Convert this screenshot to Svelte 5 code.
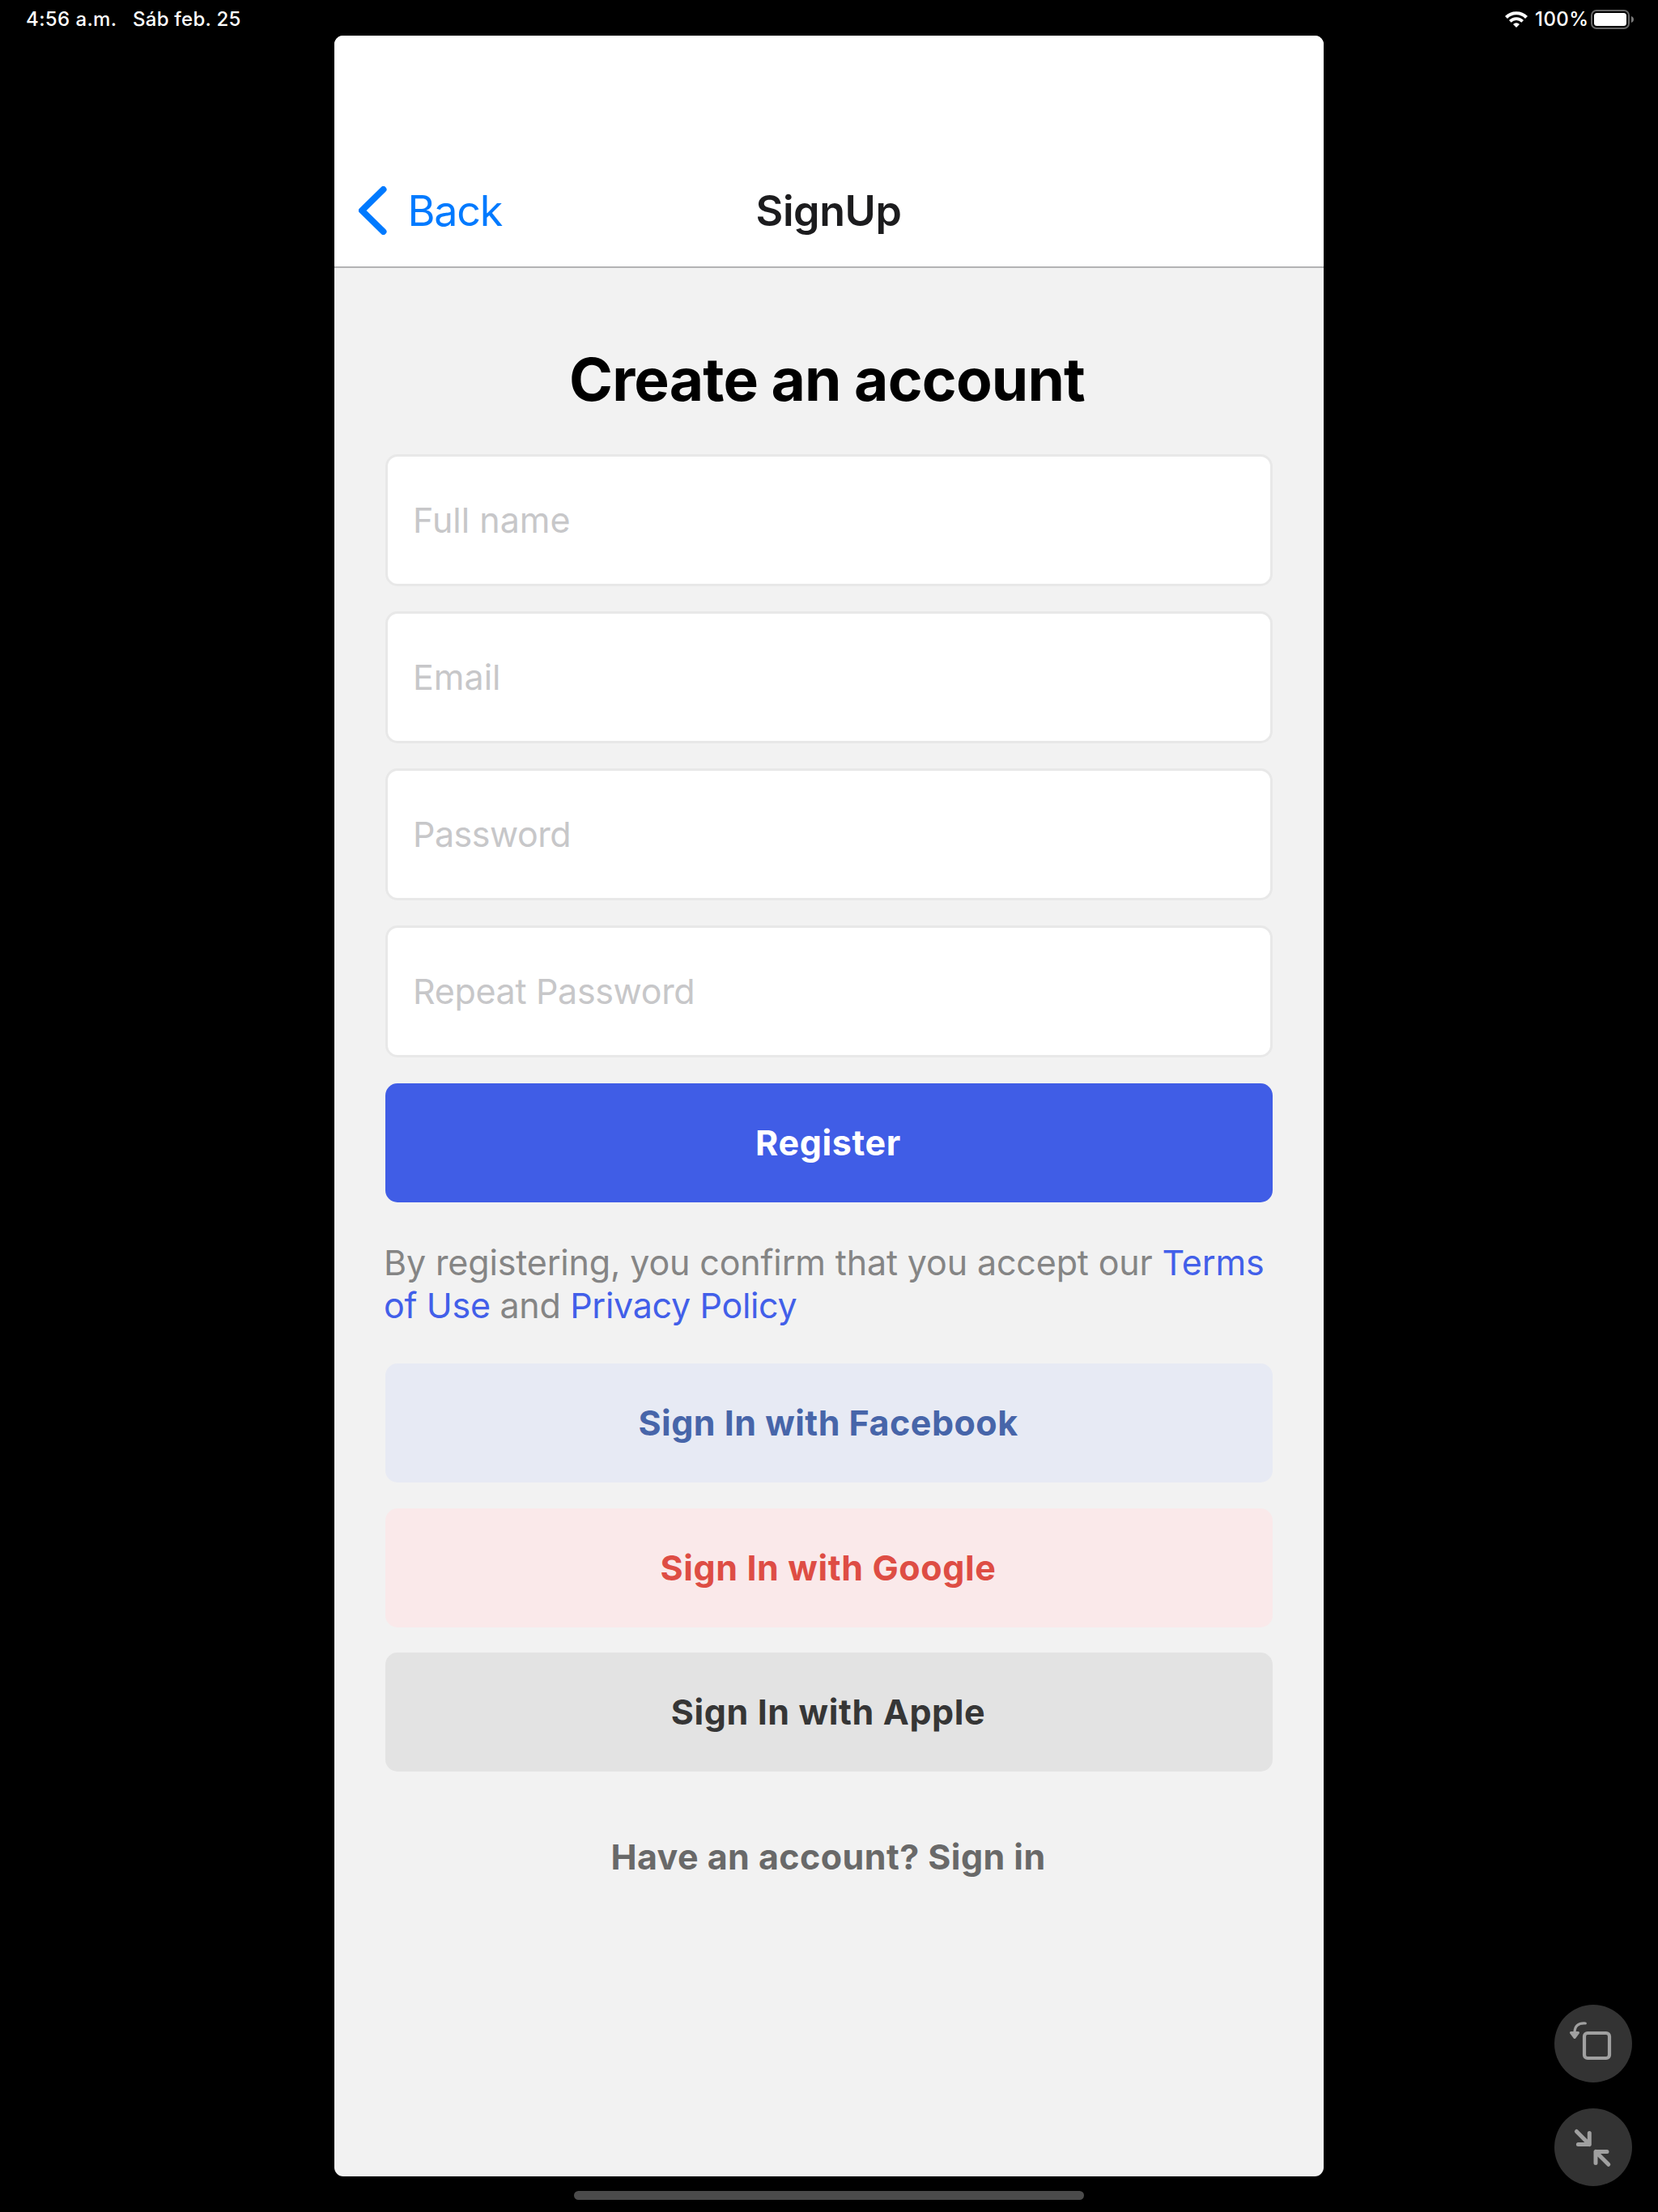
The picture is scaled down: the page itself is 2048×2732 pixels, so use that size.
<script>
  const fields = [
    { id: 'fullname', label: 'Full name' },
    { id: 'email', label: 'Email' },
    { id: 'password', label: 'Password' },
    { id: 'repeat', label: 'Repeat Password' }
  ];
  const providers = [
    { id: 'facebook', label: 'Sign In with Facebook' },
    { id: 'google', label: 'Sign In with Google' },
    { id: 'apple', label: 'Sign In with Apple' }
  ];
</script>

<div class="screen">
  <div class="status">
    <div class="clock">
      <span class="time">4:56 a.m.</span>
      <span class="date">Sáb feb. 25</span>
    </div>
    <div class="indicators">
      <svg class="wifi" width="28" height="20" viewBox="0 0 28 20" fill="none" stroke="#fff">
        <path d="M1.5 7.500a17.500 17.500 0 0 1 25 0" stroke-width="4.200" />
        <path d="M6.3 12.3a10.8 10.8 0 0 1 15.4 0" stroke-width="3.8" />
        <path d="M14 20l-4-4.1a5.8 5.8 0 0 1 8 0z" fill="#fff" stroke="none" />
      </svg>
      <span class="percent">100%</span>
      <svg class="battery" width="54" height="24" viewBox="0 0 54 24">
        <rect x="1" y="1" width="46" height="22" rx="6" fill="none" stroke="#666" stroke-width="2" />
        <rect x="4" y="4" width="40" height="16" rx="3.5" fill="#fff" />
        <path d="M50 8c4 1.3 4 6.7 0 8z" fill="#7a7a7a" />
      </svg>
    </div>
  </div>

  <main class="app">
    <header class="navbar">
      <div class="back">
        <svg width="35" height="60" viewBox="0 0 35 60" fill="none" stroke="#007aff" stroke-width="8" stroke-linecap="round" stroke-linejoin="round">
          <path d="M30.500 4L4 30L30.500 56" />
        </svg>
        <span>Back</span>
      </div>
      <div class="nav-title">SignUp</div>
    </header>

    <div class="content">
      <h1>Create an account</h1>
      <div class="fields">
        {#each fields as field (field.id)}
          <div class="field {field.id}">{field.label}</div>
        {/each}
      </div>
      <div class="button register">Register</div>
      <p class="terms">
        By registering, you confirm that you accept our <span class="link">Terms<br /></span><span class="second"><span class="link">of Use</span> and <span class="link">Privacy Policy</span></span>
      </p>
      <div class="providers">
        {#each providers as provider (provider.id)}
          <div class="button {provider.id}">{provider.label}</div>
        {/each}
      </div>
      <div class="signin">Have an account? Sign in</div>
    </div>
  </main>

  <div class="home"></div>

  <div class="controls">
    <div class="control">
      <svg width="96" height="96" viewBox="0 0 96 96" fill="none" stroke="#a0a0a0" stroke-width="4.200" stroke-linecap="round">
        <rect x="37" y="35" width="31" height="31" rx="4" />
        <path d="M38.300 23C29 22.400 25.200 26.500 25 34" stroke-width="3.200" />
        <path d="M20.500 34.500h9L25 40.500z" fill="#a0a0a0" stroke-width="3" stroke-linejoin="round" />
      </svg>
    </div>
    <div class="control">
      <svg width="96" height="96" viewBox="0 0 96 96" fill="none" stroke="#a0a0a0" stroke-width="5" stroke-linecap="round" stroke-linejoin="round">
        <path d="M27.400 28.500L43.300 44.500M43.300 30.500V44.500H29.400" />
        <path d="M66.800 69.300L51 53.400M65 53.400H51V67.500" />
      </svg>
    </div>
  </div>
</div>

<style>
  :global(body) {
    background: #000;
  }

  .screen {
    position: relative;
    display: flex;
    flex-direction: column;
    align-items: center;
    width: 2048px;
    height: 2732px;
    background: #000;
    overflow: hidden;
    font-family: Inter, 'Liberation Sans', sans-serif;
  }

  .status {
    box-sizing: border-box;
    display: flex;
    justify-content: space-between;
    width: 100%;
    height: 44px;
    padding: 0 29px 0 32px;
    color: #fff;
    font-size: 24px;
    font-weight: 450;
    line-height: 48px;
    white-space: nowrap;
  }

  .clock {
    display: flex;
  }

  .time {
    width: 132px;
    letter-spacing: 0.400px;
  }

  .date {
    letter-spacing: 0.250px;
  }

  .indicators {
    display: flex;
    align-items: flex-start;
  }

  .wifi {
    margin: 14px 9px 0 0;
  }

  .percent {
    width: 69px;
    letter-spacing: 0.450px;
  }

  .battery {
    margin-top: 12px;
  }

  .app {
    display: flex;
    flex-direction: column;
    width: 1222px;
    height: 2644px;
    border-radius: 11px;
    background: #f2f2f2;
    overflow: hidden;
  }

  .navbar {
    box-sizing: border-box;
    display: grid;
    grid-template-columns: 1fr auto 1fr;
    align-items: center;
    height: 287px;
    padding: 147px 30px 0;
    border-bottom: 2px solid #b3b3b4;
    background: #fff;
    font-size: 52px;
    line-height: 62px;
  }

  .back {
    display: flex;
    align-items: center;
    gap: 25.500px;
    color: #007aff;
    letter-spacing: -1.200px;
  }

  .back span,
  .nav-title {
    padding-top: 2px;
  }

  .nav-title {
    padding-right: 1px;
    color: #1c1c1e;
    font-weight: 600;
    letter-spacing: -0.407px;
  }

  .content {
    display: flex;
    flex-direction: column;
    padding: 93px 63px 0;
  }

  h1 {
    margin: 0 0 47px;
    color: #000;
    font-size: 73px;
    font-weight: 700;
    line-height: 90px;
    letter-spacing: -0.837px;
    text-align: center;
    text-indent: -5px;
  }

  .fields {
    display: flex;
    flex-direction: column;
    gap: 31px;
  }

  .field {
    box-sizing: border-box;
    height: 163px;
    padding-left: 31px;
    border: 3px solid #e8e8e8;
    border-radius: 15px;
    background: #fff;
    color: #c7c7c9;
    font-size: 43px;
    line-height: 157px;
  }

  .password {
    letter-spacing: -0.500px;
  }

  .repeat {
    letter-spacing: -0.330px;
  }

  .button {
    height: 147px;
    border-radius: 15px;
    font-size: 43px;
    font-weight: 700;
    line-height: 147px;
    text-align: center;
    text-indent: -2px;
  }

  .register {
    margin-top: 32px;
    background: #405de6;
    color: #fff;
    letter-spacing: 0.650px;
  }

  .terms {
    margin: 48px 0 45px;
    color: #858585;
    font-size: 43px;
    line-height: 53px;
    letter-spacing: -0.150px;
    text-indent: -2px;
    white-space: nowrap;
  }

  .second {
    letter-spacing: -0.313px;
    margin-left: -2px;
  }

  .link {
    color: #425fe9;
  }

  .providers {
    display: flex;
    flex-direction: column;
    gap: 31.500px;
  }

  .facebook {
    background: #e7eaf4;
    color: #4765a9;
    letter-spacing: 0.480px;
  }

  .google {
    background: #fae9ea;
    color: #de4d44;
    line-height: 146px;
    letter-spacing: 0.620px;
  }

  .apple {
    background: #e3e3e3;
    color: #363636;
    letter-spacing: 0.620px;
  }

  .signin {
    margin-top: 79px;
    color: #696969;
    font-size: 43px;
    font-weight: 700;
    line-height: 53px;
    letter-spacing: 0.430px;
    text-align: center;
    text-indent: -2px;
  }

  .home {
    width: 630px;
    height: 11px;
    margin-top: 18px;
    border-radius: 6px;
    background: #4b4b4b;
  }

  /* Floating window controls over the backdrop */
  .controls {
    position: absolute;
    right: 32px;
    bottom: 32px;
    display: flex;
    flex-direction: column;
    gap: 32px;
  }

  .control {
    width: 96px;
    height: 96px;
    border-radius: 50%;
    background: #333;
  }

  .control svg {
    display: block;
  }
</style>
